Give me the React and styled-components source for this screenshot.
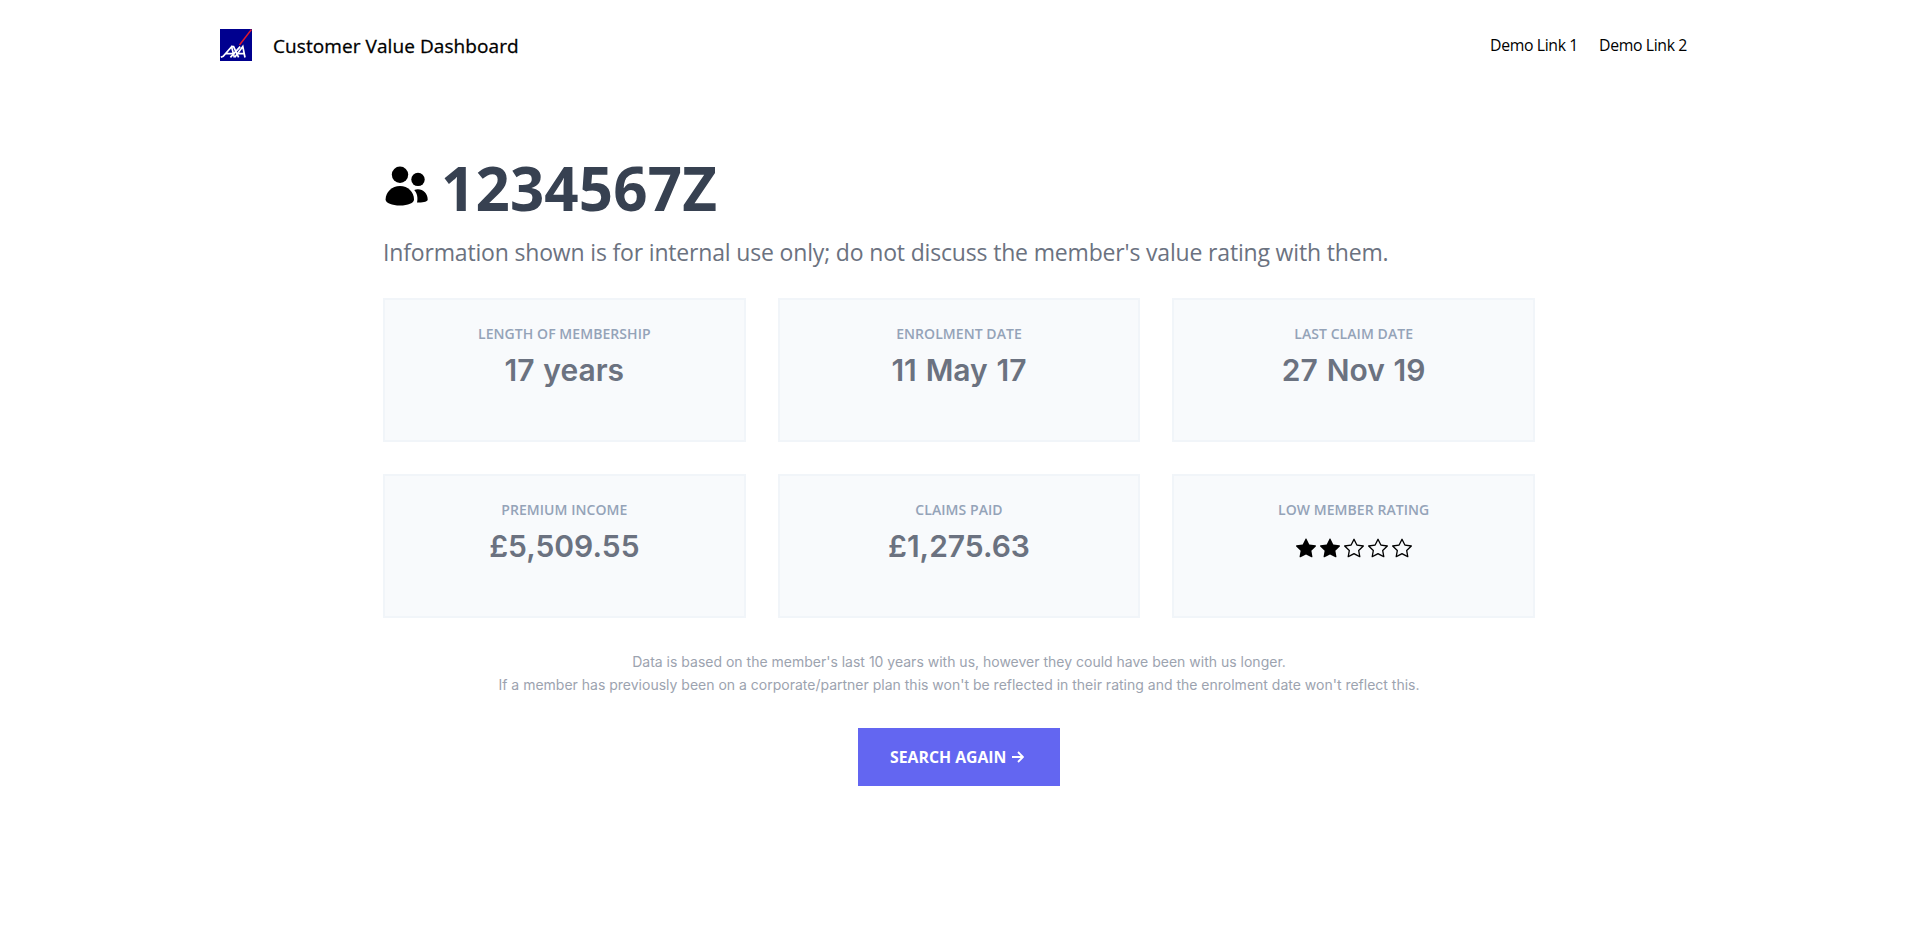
import React from "react";
import styled, { createGlobalStyle } from "styled-components";
import { BsStar, BsStarFill } from "react-icons/bs";

const Global = createGlobalStyle`
  *, *::before, *::after { box-sizing: border-box; }
  body { margin: 0; background: #fff; color: #000; font-family: "Open Sans", "Noto Sans", sans-serif; }
  h1, p { margin: 0; }
`;

const Header = styled.header`
  display: flex;
  align-items: center;
  justify-content: space-between;
  width: 1479px;
  height: 90px;
  margin: 0 auto;
  padding-right: 12px;
`;
const Brand = styled.div`
  display: flex;
  align-items: center;
  gap: 21px;
`;
const Logo = styled.svg`
  display: block;
  width: 32px;
  height: 32px;
`;
const BrandName = styled.span`
  padding-top: 2px;
  font-size: 19px;
  font-weight: 500;
  line-height: 28px;
  letter-spacing: 0.08px;
  -webkit-text-stroke: 0.3px #000;
`;
const Nav = styled.nav`
  display: flex;
  gap: 21px;
`;
const NavLink = styled.a`
  color: #000;
  font-size: 15.8px;
  line-height: 24px;
  letter-spacing: -0.36px;
`;
const Main = styled.main`
  width: 1153px;
  margin: 0 auto;
  padding: 62px 1px 0 0;
`;
const Title = styled.h1`
  display: flex;
  align-items: center;
  gap: 12px;
  height: 72px;
  color: #374151;
  font-size: 60px;
  font-weight: 700;
  line-height: 72px;
  letter-spacing: 0.15px;
`;
const PeopleIcon = styled.svg`
  width: 46px;
  height: 48px;
  flex: none;
`;
const Lead = styled.p`
  margin-top: 10px;
  color: #6b7280;
  font-size: 23px;
  line-height: 36px;
  letter-spacing: -0.17px;
  white-space: nowrap;
`;
const Grid = styled.section`
  display: grid;
  grid-template-columns: repeat(3, 1fr);
  gap: 32px;
  margin-top: 28px;
`;
const Card = styled.article`
  display: flex;
  flex-direction: column;
  align-items: center;
  height: 144px;
  padding-top: 24px;
  background: #f8fafc;
  border: 2px solid #f1f5f9;
`;
const Label = styled.span`
  color: #94a3b8;
  font-size: 14px;
  font-weight: 600;
  line-height: 20px;
  letter-spacing: 0.06px;
`;
const Value = styled.span`
  margin-top: 8px;
  color: #6b7280;
  font-family: Inter, sans-serif;
  font-size: 30px;
  font-weight: 600;
  line-height: 36px;
  word-spacing: 1.3px;
`;
const Stars = styled.div`
  display: flex;
  gap: 4px;
  margin-top: 18px;
  font-size: 20px;
`;
const Note = styled.p`
  margin-top: 32px;
  color: #9ca3af;
  font-family: Inter, sans-serif;
  font-size: 14px;
  line-height: 23px;
  text-align: center;
`;
const Actions = styled.div`
  display: flex;
  justify-content: center;
  margin-top: 32px;
`;
const Button = styled.button`
  display: flex;
  align-items: center;
  gap: 6px;
  width: 202px;
  height: 58px;
  padding: 0 0 0 32px;
  border: 0;
  background: #6366f1;
  color: #fff;
  font: 700 15.8px/24px "Open Sans", "Noto Sans", sans-serif;
`;

const metrics = [
  ["LENGTH OF MEMBERSHIP", "17 years"],
  ["ENROLMENT DATE", "11 May 17"],
  ["LAST CLAIM DATE", "27 Nov 19"],
  ["PREMIUM INCOME", "£5,509.55"],
  ["CLAIMS PAID", "£1,275.63"],
];

function AxaLogo() {
  return (
    <Logo viewBox="0 0 32 32" role="img" aria-label="AXA">
      <rect width="32" height="32" fill="#00008f" />
      <path d="M31.5 0.5L19.5 16" stroke="#e0182d" strokeWidth="1.5" />
      <g fill="none" stroke="#fff" strokeWidth="1.7">
        <path d="M0.8 28.2L3.2 27.2L11.6 17.8L14.4 28.5M5.4 24.6H13" />
        <path d="M11.6 17.6H13.6L18.6 28.4M20.2 17.6L10.4 28.4" />
        <path d="M14.8 28.2L22.8 17.6L25 28.5M17.4 24.6H24" />
      </g>
    </Logo>
  );
}

function Rating({ value }) {
  return (
    <Stars>
      {[1, 2, 3, 4, 5].map((n) => (n <= value ? <BsStarFill key={n} /> : <BsStar key={n} />))}
    </Stars>
  );
}

export default function App() {
  return (
    <>
      <Global />
      <Header>
        <Brand>
          <AxaLogo />
          <BrandName>Customer Value Dashboard</BrandName>
        </Brand>
        <Nav>
          <NavLink>Demo Link 1</NavLink>
          <NavLink>Demo Link 2</NavLink>
        </Nav>
      </Header>
      <Main>
        <Title>
          <PeopleIcon viewBox="0 0 46 48">
            <circle cx="17" cy="10.8" r="8.2" />
            <circle cx="35" cy="15.4" r="6.7" />
            <path d="M17 22C25 22 31 28 31 35.5C31 39 25 41.5 17 41.5S2.6 39 2.6 35.5C2.6 28 9 22 17 22Z" />
            <path d="M31.2 25.9C38.5 23.5 44.7 28.5 44.7 35.5C44.7 37.5 40.5 38.7 34 38.4C35.2 33.5 34 29 31.2 25.9Z" />
          </PeopleIcon>
          1234567Z
        </Title>
        <Lead>Information shown is for internal use only; do not discuss the member's value rating with them.</Lead>
        <Grid>
          {metrics.map(([label, value]) => (
            <Card key={label}>
              <Label>{label}</Label>
              <Value>{value}</Value>
            </Card>
          ))}
          <Card>
            <Label>LOW MEMBER RATING</Label>
            <Rating value={2} />
          </Card>
        </Grid>
        <Note>
          Data is based on the member's last 10 years with us, however they could have been with us longer.
          <br />
          If a member has previously been on a corporate/partner plan this won't be reflected in their rating and the enrolment date won't reflect this.
        </Note>
        <Actions>
          <Button>
            SEARCH AGAIN
            <svg width="12" height="12" viewBox="0 0 12 12" fill="none" stroke="#fff" strokeWidth="1.8">
              <path d="M0 6H11M6 1L11 6L6 11" />
            </svg>
          </Button>
        </Actions>
      </Main>
    </>
  );
}
